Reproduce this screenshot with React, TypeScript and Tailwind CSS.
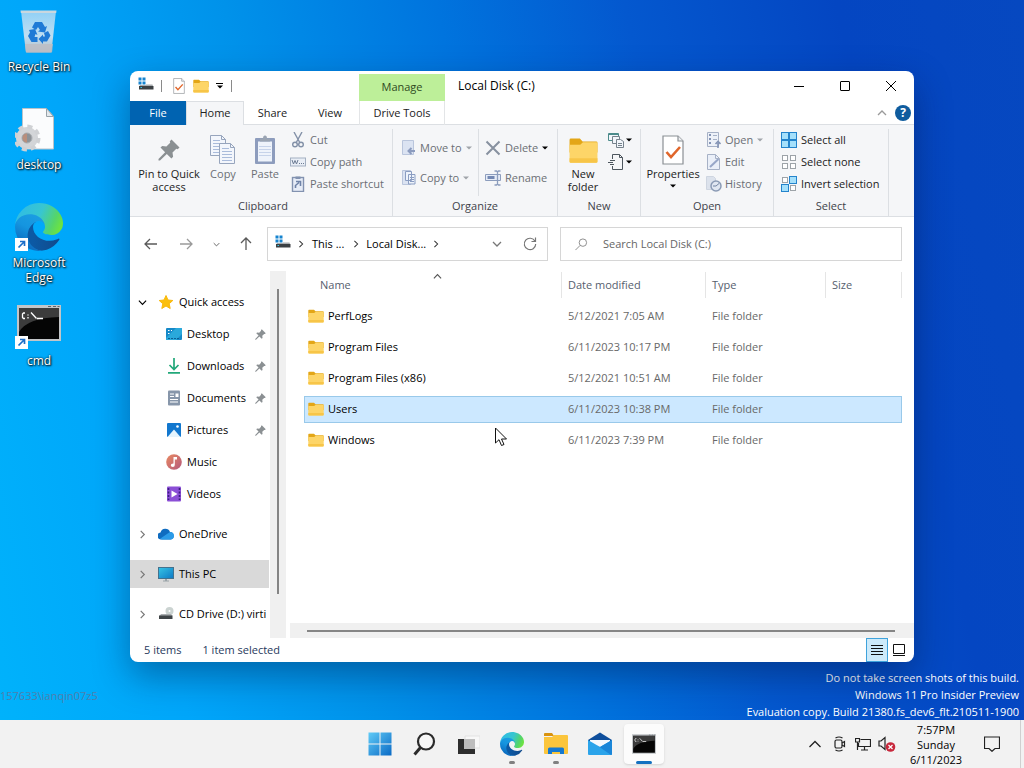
import type { ReactNode } from "react";
import clsx from "clsx";

const EdgeIcon = ({ id, className }: { id: string; className?: string }) => (
	<svg viewBox="0 0 256 256" className={className}>
		<defs>
			<linearGradient id={`${id}-a`} x1="0.2" y1="0.5" x2="1" y2="0.5">
				<stop offset="0" stopColor="#0c59a4" />
				<stop offset="1" stopColor="#114a8b" />
			</linearGradient>
			<linearGradient id={`${id}-b`} x1="0.7" y1="0.1" x2="0.3" y2="1">
				<stop offset="0" stopColor="#1b9de2" />
				<stop offset="0.4" stopColor="#1595df" />
				<stop offset="1" stopColor="#0a62b8" />
			</linearGradient>
			<linearGradient id={`${id}-c`} x1="0" y1="0.3" x2="1" y2="0.6">
				<stop offset="0" stopColor="#2fbbe6" />
				<stop offset="0.5" stopColor="#38c6d0" />
				<stop offset="0.82" stopColor="#55d569" />
				<stop offset="1" stopColor="#6ee33f" />
			</linearGradient>
		</defs>
		<g transform="translate(-4.6 -4.9)">
			<path
				fill={`url(#${id}-a)`}
				d="M235.68 195.46a93.73 93.73 0 0 1-10.54 4.71 101.87 101.87 0 0 1-35.9 6.46c-47.32 0-88.54-32.55-88.54-74.32A31.48 31.48 0 0 1 117.13 105c-42.8 1.8-53.8 46.4-53.8 72.53 0 73.88 68.09 81.37 82.76 81.37 7.91 0 19.84-2.3 27-4.56l1.31-.44a128.34 128.34 0 0 0 66.6-52.8 4 4 0 0 0-5.32-5.64z"
			/>
			<path
				fill={`url(#${id}-b)`}
				d="M110.34 246.34A79.2 79.2 0 0 1 87.6 225a80.72 80.72 0 0 1 29.53-120c3.12-1.47 8.45-4.13 15.54-4a32.35 32.35 0 0 1 25.69 13 31.88 31.88 0 0 1 6.36 18.66c0-.21 24.46-79.6-80-79.6-43.9 0-80 41.66-80 78.21a130.15 130.15 0 0 0 12.11 56 128 128 0 0 0 156.38 67.11 75.55 75.55 0 0 1-62.78-8z"
			/>
			<path
				fill={`url(#${id}-c)`}
				d="M156.94 153.78c-.81 1.05-3.3 2.5-3.3 5.66 0 2.61 1.7 5.12 4.72 7.23 14.38 10 41.49 8.68 41.56 8.68a59.56 59.56 0 0 0 30.27-8.35 61.38 61.38 0 0 0 30.43-52.88c.26-22.41-8-37.31-11.34-43.91C228.09 28.76 182.35 4.92 132.61 4.92a128 128 0 0 0-128 126.2c.48-36.54 36.8-66.05 80-66.05 3.5 0 23.46.34 42 10.07 16.34 8.58 24.9 18.94 30.85 29.21 6.18 10.67 7.28 24.15 7.28 29.52s-2.74 13.33-7.8 19.91z"
			/>
		</g>
	</svg>
);

const RecycleBinIcon = () => (
	<svg viewBox="0 0 48 48" className="size-12">
		<defs>
			<linearGradient id="bin" x1="0" y1="0" x2="0" y2="1">
				<stop offset="0" stopColor="#8fd0f6" />
				<stop offset="0.6" stopColor="#bfdef2" />
				<stop offset="1" stopColor="#b3bcc4" />
			</linearGradient>
		</defs>
		<path d="M6 4h35l-4.500 40.500q-.2 1-1 1H12q-1 0-1.200-1z" fill="url(#bin)" />
		<path d="M5.500 3.500h36l-.3 2.500H5.800z" fill="#c9d7df" />
		<path d="M10 37h28l-1 8.500H11z" fill="#bdbdc3" opacity=".8" />
		<g fill="#1f7ad6">
			<path d="M20 15h7l3 5 2-1-2 6.500-7-1 2-1.500-2-3-2 3-4-2.500z" />
			<path d="M29 26l4-2 2.500 4.500-3.500 6h-4v2.500l-4.500-5 4.500-4.500v2h2z" />
			<path d="M14 23l6-1 2.500 6-2-1-1 3h3v5h-6L13 29l2-3.500z" />
		</g>
	</svg>
);

const SettingsFileIcon = () => (
	<svg viewBox="0 0 48 48" className="size-12">
		<path d="M7.500 3.500h24l7 8v32.500h-31z" fill="#fbfcfd" stroke="#b9c3ca" />
		<path d="M31.500 3.500v8h7z" fill="#e4e9ec" stroke="#98a2a9" />
		<circle cx="12" cy="33" r="8" fill="none" stroke="#d3d5d8" strokeWidth="6" />
		<circle cx="12" cy="33" r="11.500" fill="none" stroke="#cfd1d4" strokeWidth="4" strokeDasharray="5 4.030" />
		<circle cx="12" cy="33" r="5" fill="#8d9297" stroke="#a9adb1" />
		<path d="M12 28.500a4.500 4.500 0 0 0 0 9z" fill="#b98f7d" />
	</svg>
);

const CmdIcon = ({ className }: { className?: string }) => (
	<svg viewBox="0 0 44 36" className={className}>
		<rect width="44" height="36" fill="#c3c6c9" />
		<path d="M31 1.500h3M36 1.500h3M40.500 1.500h2" stroke="#59656e" />
		<rect x="2" y="3" width="40" height="31" fill="#050505" />
		<path d="M2 3h40v9Q10 13 2 27z" fill="#3c3c3c" />
		<path d="M8 8H6.500L5.500 9v3.500l1 1H8M11 9.500v1M11 12v1.500M14 7.500l5.500 6M20 13.500h6" stroke="#fff" strokeWidth="1.300" fill="none" />
	</svg>
);

const ShortcutBadge = () => (
	<svg viewBox="0 0 13 13" className="absolute bottom-0 left-0 size-[13px]">
		<rect width="13" height="13" fill="#fff" />
		<path d="M3.500 9.500L9 4M5 3.500h4.500V8" stroke="#1c6fc9" strokeWidth="1.700" fill="none" />
	</svg>
);

const FolderIcon = ({ className }: { className?: string }) => (
	<svg viewBox="0 0 16 14" className={className} preserveAspectRatio="none">
		<path d="M.3 1.500Q.3.800 1 .8h5l1.500 1.500H15q.7 0 .7.700v5H.3z" fill="#e3a617" />
		<path d="M.3 4h5.900L7.700 2.700H15q.7 0 .7.700v9.300q0 .7-.7.700H1q-.7 0-.7-.7z" fill="#fdd568" />
		<path d="M.3 11h15.400v1.800q0 .6-.7.600H1q-.7 0-.7-.6z" fill="#f7c548" />
	</svg>
);

const DriveIcon = () => (
	<svg viewBox="0 0 16 14" className="mb-1 h-[14px] w-4 shrink-0">
		<path d="M.5.5h3v3h-3zM4.500.5h3v3h-3zM.5 4.500h3v3h-3zM4.500 4.500h3v3h-3z" fill="#1583cf" />
		<path d="M8 7.500h6.500l.5 1.500H1.500L2 8h6z" fill="#a9adb0" />
		<path d="M1 9h14.500v3.500H1z" fill="#3c4144" />
		<path d="M2.500 10.500h1.500" stroke="#39c6e8" />
	</svg>
);

const CheckPageIcon = ({ className }: { className?: string }) => (
	<svg viewBox="0 0 22 30" className={className}>
		<path d="M1 1h15l5 5v23H1z" fill="#fff" stroke="#8a8f94" strokeWidth="1.200" />
		<path d="M16 1v5h5" fill="#eef0f2" stroke="#8a8f94" strokeWidth="1.200" />
		<path d="M4.500 17l4.500 5 9-10" stroke="#e0662b" strokeWidth="2.600" fill="none" />
	</svg>
);

const PinIcon = ({ className }: { className?: string }) => (
	<svg viewBox="0 0 22 22" className={className} fill="#8b9093">
		<path d="M13.500.5l8 8-1.800 1.700-1.400-.4-3.800 3.800.6 4.200-1.700 1.700-4.600-4.600L2 21.500H.5V20l6.600-6.800L2.500 8.600l1.700-1.700 4.200.6 3.800-3.800-.4-1.400z" />
	</svg>
);

const Chevron = ({ dir, className }: { dir: "up" | "down" | "right"; className?: string }) => (
	<svg viewBox="0 0 10 10" className={clsx("shrink-0", className)} fill="none" stroke="currentColor" strokeWidth="1.300">
		{dir === "up" && <path d="M1 7l4-4 4 4" />}
		{dir === "down" && <path d="M1 3l4 4 4-4" />}
		{dir === "right" && <path d="M3 1l4 4-4 4" />}
	</svg>
);

const Caret = ({ className }: { className?: string }) => (
	<svg viewBox="0 0 6 4" className={clsx("h-1 w-[6px] shrink-0", className)} fill="currentColor">
		<path d="M0 .5h6L3 3.500z" />
	</svg>
);

/* ribbon drawings */

const PageLines = ({ x, y }: { x: number; y: number }) => (
	<g transform={`translate(${x} ${y})`}>
		<path d="M.5.5h11l4 4v16H.5z" fill="#f3f6fc" stroke="#97a5bd" />
		<path d="M11.500.5v4h4" fill="none" stroke="#97a5bd" />
		<path d="M3 5.500h7M3 8.500h10M3 11.500h10M3 14.500h10M3 17.500h10" stroke="#a9bbdb" />
	</g>
);

const CopyIcon = () => (
	<svg viewBox="0 0 26 30" className="h-[30px] w-[26px]">
		<PageLines x={0} y={0} />
		<PageLines x={9} y={8} />
	</svg>
);

const PasteIcon = () => (
	<svg viewBox="0 0 22 30" className="h-[30px] w-[22px]">
		<rect x="1" y="3" width="20" height="26" rx="1" fill="#8d9cbd" />
		<path d="M4 6.500h14v20H4z" fill="#eef3fb" />
		<path d="M6 3.500h3q0-3 2-3t2 3h3v3H6z" fill="#9aa4b2" />
		<path d="M5 11.500h12M5 14.500h12M5 17.500h12M5 20.500h12" stroke="#c6d3ea" />
	</svg>
);

const CutIcon = () => (
	<svg viewBox="0 0 16 16" className="size-4 shrink-0" fill="none" stroke="#8391a8" strokeWidth="1.400">
		<path d="M4 0l6 11M12 0L6 11" />
		<circle cx="5" cy="12.500" r="2.300" />
		<circle cx="11" cy="12.500" r="2.300" />
	</svg>
);

const CopyPathIcon = () => (
	<svg viewBox="0 0 16 16" className="size-4 shrink-0" fill="none">
		<rect x=".5" y="4" width="15" height="8" fill="#e9eef6" stroke="#a3afc1" />
		<path d="M2 6l1.500 4L5 6.500 6.500 10 8 6" stroke="#6c7b93" />
		<path d="M9 9.500h1M11 9.500h1M13 9.500h1" stroke="#6c7b93" />
	</svg>
);

const PasteShortcutIcon = () => (
	<svg viewBox="0 0 16 16" className="size-4 shrink-0" fill="none">
		<rect x="2.500" y="1.500" width="11" height="14" fill="#e6ecf7" stroke="#8292b0" strokeWidth="1.400" />
		<path d="M5.500.5h5v2.500h-5z" fill="#8292b0" />
		<path d="M5.500 12V9.500l3.500-3M6 5.500h4.500V10" stroke="#6f83a8" strokeWidth="1.600" />
	</svg>
);

const MoveToIcon = () => (
	<svg viewBox="0 0 14 16" className="h-4 w-[14px] shrink-0" fill="none">
		<path d="M.5.5h11v14H.5z" fill="#dbe3f2" stroke="#b9c5dc" />
		<path d="M13 11H7M9.500 8L6.500 11l3 3" stroke="#8c9cbf" strokeWidth="2" />
	</svg>
);

const CopyToIcon = () => (
	<svg viewBox="0 0 14 16" className="h-4 w-[14px] shrink-0" fill="none">
		<path d="M.5.5h8v14h-8z" fill="#dbe3f2" stroke="#b9c5dc" />
		<path d="M3.500 1.500h6v9h-6zM6.500 4.500h6.500v9.500H6.500z" fill="#eef3fb" stroke="#8a9dc2" />
		<path d="M8 7.500h4M8 9.500h4M8 11.500h4" stroke="#8a9dc2" />
	</svg>
);

const DeleteIcon = () => (
	<svg viewBox="0 0 16 16" className="size-4 shrink-0" fill="none" stroke="#8791a0" strokeWidth="2">
		<path d="M1.500 1.500l13 13M14.500 1.500l-13 13" />
	</svg>
);

const RenameIcon = () => (
	<svg viewBox="0 0 16 16" className="size-4 shrink-0" fill="none" stroke="#8c9dbd">
		<path d="M.5 4.500h15v6H.5z" fill="#e6ecf7" />
		<path d="M2.500 7.500h7" stroke="#7388b3" strokeWidth="3" />
		<path d="M9.500 1h2l1 1 1-1h2M9.500 15h2l1-1 1 1h2M12.500 2v12" strokeWidth="1.300" />
	</svg>
);

const NewItemIcon = () => (
	<svg viewBox="0 0 16 16" className="size-4 shrink-0" fill="#f2f6fb" stroke="#76828c">
		<path d="M.5 1.500h10v7h-10z" stroke="#4b8b8b" />
		<path d="M1 2.500h9" stroke="#4b8b8b" />
		<path d="M4.500 4.500h7v7h-7z" />
		<path d="M8.500 7.500h4l3 2v6h-7z" />
		<path d="M10 11.500h4M10 13.500h4" />
	</svg>
);

const EasyAccessIcon = () => (
	<svg viewBox="0 0 16 16" className="size-4 shrink-0" fill="none" stroke="#4d565e">
		<path d="M4.500 5V.5h7l3 3v12h-10V12M11.500.5v3h3" />
		<path d="M2 6.500h5M0 8.500h5M2 10.500h4" />
	</svg>
);

const OpenIcon = () => (
	<svg viewBox="0 0 14 16" className="h-4 w-[14px] shrink-0" fill="none">
		<path d="M.5.500h11v14H.5z" fill="#edf1f8" stroke="#a6b1c6" />
		<path d="M2 3h2M2 7h2M2 11h2" stroke="#8494b5" strokeWidth="2" />
		<path d="M6 3.500h4M6 7.500h4" stroke="#a6b1c6" />
		<path d="M11 16v-5M8.500 12L11 9.500l2.500 2.500" stroke="#8494b5" strokeWidth="1.600" />
	</svg>
);

const EditIcon = () => (
	<svg viewBox="0 0 14 16" className="h-4 w-[14px] shrink-0" fill="none">
		<path d="M.5.5h8l4 4v11H.5z" fill="#eaeff8" stroke="#a6b1c6" />
		<path d="M3 13l8.500-8" stroke="#98a7c8" strokeWidth="2" />
		<path d="M8.500.5v4h4" stroke="#a6b1c6" />
	</svg>
);

const HistoryIcon = () => (
	<svg viewBox="0 0 16 16" className="-mx-px size-4 shrink-0" fill="none">
		<path d="M.5.5h7l2 2v11H.5z" fill="#dce2ec" stroke="#ced5e0" />
		<circle cx="10" cy="10" r="5" fill="#dfe6f1" stroke="#8b9bb5" strokeWidth="1.500" />
		<path d="M10 10l3-2.500M10 10H7" stroke="#7183a2" />
	</svg>
);

const SelectIcon = ({ filled }: { filled: boolean[] }) => (
	<svg viewBox="0 0 16 16" className="size-4 shrink-0">
		{filled.map((on, i) => (
			<rect
				key={i}
				x={(i % 2) * 8 + (on ? 0.5 : 1.5)}
				y={Math.floor(i / 2) * 8 + (on ? 0.5 : 1.5)}
				width={on ? 7 : 5}
				height={on ? 7 : 5}
				fill={on ? "#a5e0fb" : "#fff"}
				stroke={on ? "#2484cc" : "#9da3a8"}
			/>
		))}
	</svg>
);

/* sidebar drawings */

const StarIcon = () => (
	<svg viewBox="0 0 16 16" className="size-4 shrink-0">
		<path d="M8 1.500l2 4.500 4.800.500-3.600 3.200 1 4.800L8 12l-4.200 2.500 1-4.800L1.200 6.500 6 6z" fill="#fbbf0c" stroke="#f9b80a" strokeLinejoin="round" />
	</svg>
);

const DesktopIcon = () => (
	<svg viewBox="0 0 16 16" className="size-4 shrink-0">
		<rect y="2" width="16" height="12" rx="1" fill="#1689c8" />
		<path d="M0 12L10 2h5q1 0 1 1v5l-6 6H1q-1 0-1-1z" fill="#2aa9db" />
		<path d="M2 4.500h1.500M2 7.500h1.500M5 4.500h1" stroke="#fff" />
		<path d="M2 12.500h12" stroke="#0b5f94" strokeDasharray="2 1" />
	</svg>
);

const DownloadsIcon = () => (
	<svg viewBox="0 0 16 16" className="size-4 shrink-0" fill="none" stroke="#22a87a" strokeWidth="1.700">
		<path d="M8 0v11M3.500 7L8 11.500 12.500 7M2 14.800h12" />
	</svg>
);

const DocumentsIcon = () => (
	<svg viewBox="0 0 16 16" className="size-4 shrink-0">
		<rect x="2" y=".5" width="12" height="15" rx="1" fill="#8796aa" />
		<path d="M4 4h4M4 6.500h4M4 9.500h8M4 12h8" stroke="#fff" strokeWidth="1.200" />
		<path d="M9.500 3.500h3v3.500h-3z" fill="#fff" />
	</svg>
);

const PicturesIcon = () => (
	<svg viewBox="0 0 16 16" className="size-4 shrink-0">
		<rect x="1" y="1" width="14" height="14" rx="1" fill="#1277ce" />
		<path d="M1.500 15L8 7.500l6.500 7.500z" fill="#e5f4fd" />
		<circle cx="11.500" cy="4.500" r="1.300" fill="#fff" />
	</svg>
);

const MusicIcon = () => (
	<svg viewBox="0 0 16 16" className="size-4 shrink-0">
		<defs>
			<linearGradient id="music" x1="0" y1="0" x2="1" y2="1">
				<stop offset="0" stopColor="#e98a62" />
				<stop offset="1" stopColor="#b4587c" />
			</linearGradient>
		</defs>
		<circle cx="8" cy="8" r="7.800" fill="url(#music)" />
		<path d="M7.500 3h3.500v2.500H8.800V11q0 2-2 2t-2-1.800 2.700-1.700z" fill="#fff" />
	</svg>
);

const VideosIcon = () => (
	<svg viewBox="0 0 16 16" className="size-4 shrink-0">
		<rect x="1" y=".5" width="14" height="15" rx="1" fill="#8b4fd6" />
		<path d="M2.500 2v12M13.500 2v12" stroke="#3c1c80" strokeWidth="1.600" strokeDasharray="2 1.500" />
		<path d="M5.500 4.500L11.500 8l-6 3.500z" fill="#fff" />
	</svg>
);

const OneDriveIcon = () => (
	<svg viewBox="0 0 16 16" className="size-4 shrink-0">
		<path d="M3.500 13.500A3.500 3.500 0 0 1 2.500 6.500 5 5 0 0 1 12 6a3.800 3.800 0 0 1 .8 7.500z" fill="#0f6cc0" />
		<path d="M4 13.500l-2-.7L9 8l3-2a3.800 3.800 0 0 1 1 7.500z" fill="#2b9be8" />
	</svg>
);

const ThisPcIcon = () => (
	<svg viewBox="0 0 16 16" className="size-4 shrink-0">
		<defs>
			<linearGradient id="pc" x1="0" y1="0" x2="1" y2="1">
				<stop offset="0" stopColor="#37c5e6" />
				<stop offset="1" stopColor="#0d78c4" />
			</linearGradient>
		</defs>
		<rect x=".5" y="1.500" width="15" height="11" fill="url(#pc)" stroke="#44728e" />
		<path d="M7 13h2v1.500h2v1H5v-1h2z" fill="#9aa3a8" />
	</svg>
);

const CdDriveIcon = () => (
	<svg viewBox="0 0 16 16" className="size-4 shrink-0">
		<circle cx="11.500" cy="5" r="4" fill="#cbd3d1" />
		<circle cx="11.500" cy="5" r="1" fill="#fff" />
		<path d="M3 8h10l1.500 2h-13z" fill="#a9adb0" />
		<path d="M1 9.500h13.500v3.500H1z" fill="#3f4447" />
	</svg>
);

const RibbonGroup = ({ label, className, children }: { label: string; className: string; children: ReactNode }) => (
	<section className={clsx("mt-1 flex flex-col border-r border-[#dcdfe3]", className)}>
		<div className="flex flex-1">{children}</div>
		<h2 className="h-5 text-center leading-5 text-[#3f434a]">{label}</h2>
	</section>
);

const RibbonItem = ({ icon, label, caret, disabled, darkCaret }: { icon: ReactNode; label: string; caret?: boolean; disabled?: boolean; darkCaret?: boolean }) => (
	<button
		disabled={disabled}
		className={clsx("flex h-[22px] items-center gap-1 whitespace-nowrap", disabled ? "text-[#6b6f75]" : "text-[#222]")}>
		{icon}
		{label}
		{caret && <Caret className={darkCaret ? "text-black" : "text-[#a0a4a9]"} />}
	</button>
);

const RibbonTall = ({ icon, label, className, disabled, caret }: { icon: ReactNode; label: string; className: string; disabled?: boolean; caret?: boolean }) => (
	<button
		disabled={disabled}
		className={clsx("flex flex-col items-center pt-1", className, disabled ? "text-[#6b6f75]" : "text-[#222]")}>
		<span className="flex h-[34px] items-center justify-center">{icon}</span>
		<span className="text-center leading-[13px]">{label}</span>
		{caret && <Caret className="mt-1 text-black" />}
	</button>
);

const ribbonTabs = [
	{ label: "File", className: "w-14 bg-[#0063b1] text-white" },
	{ label: "Home", className: "w-[58px] border-x border-t border-[#dcdfe3] bg-[#f5f6f8] text-[#222]" },
	{ label: "Share", className: "w-[57px] text-[#222]" },
	{ label: "View", className: "w-[58px] text-[#222]" },
	{ label: "Drive Tools", className: "w-[86px] border-x border-[#e3e5e7] text-[#222]" },
];

const quickAccess = [
	{ label: "Desktop", icon: <DesktopIcon />, pinned: true },
	{ label: "Downloads", icon: <DownloadsIcon />, pinned: true },
	{ label: "Documents", icon: <DocumentsIcon />, pinned: true },
	{ label: "Pictures", icon: <PicturesIcon />, pinned: true },
	{ label: "Music", icon: <MusicIcon /> },
	{ label: "Videos", icon: <VideosIcon /> },
];

const places = [
	{ label: "OneDrive", icon: <OneDriveIcon /> },
	{ label: "This PC", icon: <ThisPcIcon />, active: true },
	{ label: "CD Drive (D:) virti", icon: <CdDriveIcon /> },
];

const files = [
	{ name: "PerfLogs", date: "5/12/2021 7:05 AM" },
	{ name: "Program Files", date: "6/11/2023 10:17 PM" },
	{ name: "Program Files (x86)", date: "5/12/2021 10:51 AM" },
	{ name: "Users", date: "6/11/2023 10:38 PM", selected: true },
	{ name: "Windows", date: "6/11/2023 7:39 PM" },
];

const desktopIcons = [
	{ label: "Recycle Bin", icon: <RecycleBinIcon /> },
	{ label: "desktop", icon: <SettingsFileIcon /> },
	{ label: "Microsoft Edge", icon: <EdgeIcon id="desk-edge" className="size-12" />, shortcut: true },
	{ label: "cmd", icon: <CmdIcon className="mb-2 h-9 w-11" />, shortcut: true },
];

const TitleBar = () => (
	<header className="flex h-[30px]">
		<div className="flex w-[229px] items-center pl-2">
			<DriveIcon />
			<span className="ml-[7px] h-3 w-px bg-[#8a8a8a]" />
			<button aria-label="Properties" className="ml-[11px]">
				<CheckPageIcon className="h-4 w-3" />
			</button>
			<button aria-label="New folder" className="ml-2">
				<FolderIcon className="h-[14px] w-4" />
			</button>
			<button aria-label="Customize Quick Access Toolbar" className="ml-[7px] flex flex-col items-center gap-px">
				<span className="h-px w-[7px] bg-black" />
				<Caret />
			</button>
			<span className="ml-2 h-3 w-px bg-[#8a8a8a]" />
		</div>
		<div className="mt-[3px] flex w-[86px] items-center justify-center bg-[#bdef99] text-[#2f4a1f]">Manage</div>
		<h1 className="flex flex-1 items-center pl-[13px] text-xs text-black">Local Disk (C:)</h1>
		<button aria-label="Minimize" className="flex w-[46px] items-center justify-center">
			<span className="h-px w-[10px] bg-black" />
		</button>
		<button aria-label="Maximize" className="flex w-[46px] items-center justify-center">
			<span className="size-[10px] rounded-[1px] border border-black" />
		</button>
		<button aria-label="Close" className="flex w-[46px] items-center justify-center">
			<svg viewBox="0 0 10 10" className="size-[10px]" stroke="#000">
				<path d="M0 0l10 10M10 0L0 10" />
			</svg>
		</button>
	</header>
);

const Ribbon = () => (
	<>
		<nav className="flex h-6 border-b border-[#dcdfe3]">
			{ribbonTabs.map((tab) => (
				<button key={tab.label} className={clsx("h-6", tab.className)}>
					{tab.label}
				</button>
			))}
			<div className="flex flex-1 items-center justify-end gap-2 pr-[3px]">
				<button aria-label="Minimize the Ribbon" className="text-[#9a9a9a]">
					<Chevron dir="up" className="size-[10px]" />
				</button>
				<button aria-label="Help" className="size-4 rounded-full bg-[#0f5c9e] text-center text-xs font-bold leading-4 text-white">
					?
				</button>
			</div>
		</nav>
		<div className="flex h-[92px] border-b border-[#dcdfe3] bg-[#f5f6f8]">
			<RibbonGroup label="Clipboard" className="w-[263px] pl-1">
				<RibbonTall className="w-[70px]" icon={<PinIcon className="size-[22px]" />} label="Pin to Quick access" />
				<RibbonTall disabled className="w-[38px]" icon={<CopyIcon />} label="Copy" />
				<RibbonTall disabled className="w-[46px]" icon={<PasteIcon />} label="Paste" />
				<div className="ml-[2px]">
					<RibbonItem disabled icon={<CutIcon />} label="Cut" />
					<RibbonItem disabled icon={<CopyPathIcon />} label="Copy path" />
					<RibbonItem disabled icon={<PasteShortcutIcon />} label="Paste shortcut" />
				</div>
			</RibbonGroup>
			<RibbonGroup label="Organize" className="w-[165px]">
				<div className="flex w-[86px] flex-col gap-2 border-r border-[#dcdfe3] pl-[9px] pt-2">
					<RibbonItem disabled caret icon={<MoveToIcon />} label="Move to" />
					<RibbonItem disabled caret icon={<CopyToIcon />} label="Copy to" />
				</div>
				<div className="flex flex-col gap-2 pl-[6px] pt-2">
					<RibbonItem disabled caret darkCaret icon={<DeleteIcon />} label="Delete" />
					<RibbonItem disabled icon={<RenameIcon />} label="Rename" />
				</div>
			</RibbonGroup>
			<RibbonGroup label="New" className="w-[83px]">
				<RibbonTall className="w-[50px]" icon={<FolderIcon className="h-[27px] w-[29px]" />} label="New folder" />
				<div>
					<button aria-label="New item" className="flex h-[22px] items-center gap-[2px]">
						<NewItemIcon />
						<Caret className="text-black" />
					</button>
					<button aria-label="Easy access" className="flex h-[22px] items-center gap-[2px]">
						<EasyAccessIcon />
						<Caret className="text-black" />
					</button>
				</div>
			</RibbonGroup>
			<RibbonGroup label="Open" className="w-[133px]">
				<RibbonTall caret className="w-[64px]" icon={<CheckPageIcon className="h-[30px] w-[22px]" />} label="Properties" />
				<div className="pl-[2px]">
					<RibbonItem disabled caret icon={<OpenIcon />} label="Open" />
					<RibbonItem disabled icon={<EditIcon />} label="Edit" />
					<RibbonItem disabled icon={<HistoryIcon />} label="History" />
				</div>
			</RibbonGroup>
			<RibbonGroup label="Select" className="w-[115px]">
				<div className="pl-[7px]">
					<RibbonItem icon={<SelectIcon filled={[true, true, true, true]} />} label="Select all" />
					<RibbonItem icon={<SelectIcon filled={[false, false, false, false]} />} label="Select none" />
					<RibbonItem icon={<SelectIcon filled={[false, true, true, false]} />} label="Invert selection" />
				</div>
			</RibbonGroup>
		</div>
	</>
);

const AddressRow = () => (
	<div className="flex items-center gap-3 pb-[7px] pl-[14px] pr-3 pt-[10px]">
		<div className="flex w-[111px] items-center text-[#5a5a5a]">
			<button aria-label="Back">
				<svg viewBox="0 0 14 14" className="size-[14px]" fill="none" stroke="currentColor" strokeWidth="1.300">
					<path d="M13 7H1M6 2L1 7l5 5" />
				</svg>
			</button>
			<button aria-label="Forward" className="ml-[21px] text-[#9a9a9a]">
				<svg viewBox="0 0 14 14" className="size-[14px]" fill="none" stroke="currentColor" strokeWidth="1.300">
					<path d="M1 7h12M8 2l5 5-5 5" />
				</svg>
			</button>
			<button aria-label="Recent locations" className="ml-5">
				<Chevron dir="down" className="size-[7px]" />
			</button>
			<button aria-label="Up" className="ml-[19px]">
				<svg viewBox="0 0 14 14" className="size-[14px]" fill="none" stroke="currentColor" strokeWidth="1.300">
					<path d="M7 13V1M2 6l5-5 5 5" />
				</svg>
			</button>
		</div>
		<div className="flex h-[34px] w-[281px] items-center border border-[#d6d6d6] pl-[7px] pr-[10px] text-black">
			<DriveIcon />
			<Chevron dir="right" className="ml-[6px] size-2 text-[#333]" />
			<button className="ml-[7px]">This ...</button>
			<Chevron dir="right" className="ml-2 size-2 text-[#333]" />
			<button className="ml-[6px]">Local Disk...</button>
			<Chevron dir="right" className="ml-[6px] size-2 text-[#333]" />
			<button aria-label="Previous locations" className="ml-auto text-[#777]">
				<Chevron dir="down" className="size-[10px]" />
			</button>
			<button aria-label="Refresh" className="ml-[21px]">
				<svg viewBox="0 0 14 14" className="size-[14px]" fill="none" stroke="#777" strokeWidth="1.200">
					<path d="M12 4.200A5.700 5.700 0 1 0 12.700 7M12.500.5v4h-4" />
				</svg>
			</button>
		</div>
		<label className="flex h-[34px] flex-1 items-center border border-[#d6d6d6] pl-[14px]">
			<svg viewBox="0 0 14 14" className="size-[13px]" fill="none" stroke="#888">
				<circle cx="8.500" cy="5" r="4" />
				<path d="M5.500 8L.5 13" />
			</svg>
			<input
				aria-label="Search"
				placeholder="Search Local Disk (C:)"
				className="ml-[15px] min-w-0 flex-1 bg-transparent outline-none placeholder:text-[#666]"
			/>
		</label>
	</div>
);

const Sidebar = () => (
	<aside className="flex w-[156px] shrink-0">
		<nav className="flex min-w-0 flex-1 flex-col gap-1 overflow-hidden whitespace-nowrap pt-5 text-black">
			<a href="#quick" className="flex h-7 items-center pl-2">
				<Chevron dir="down" className="size-[9px]" />
				<span className="ml-[11px] mr-[5px]">
					<StarIcon />
				</span>
				Quick access
			</a>
			{quickAccess.map((item) => (
				<a key={item.label} href="#folder" className="flex h-7 items-center gap-[5px] pl-9 pr-[3px]">
					{item.icon}
					{item.label}
					{item.pinned && <PinIcon className="ml-auto size-[11px] shrink-0" />}
				</a>
			))}
			{places.map((item) => (
				<a key={item.label} href="#place" className={clsx("mt-2 flex h-7 items-center pl-2", item.active && "bg-[#d9d9d9]")}>
					<Chevron dir="right" className="size-[9px] text-[#777]" />
					<span className="ml-[11px] mr-[5px]">{item.icon}</span>
					{item.label}
				</a>
			))}
		</nav>
		<div className="ml-px mt-[3px] w-4 bg-[#f0f0f0] pb-11 pl-[7px] pt-[18px]">
			<div className="h-full w-[2px] bg-[#858585]" />
		</div>
	</aside>
);

const FileList = () => (
	<div className="flex flex-1 flex-col pl-1">
		<div className="flex-1 pl-[14px] pr-3">
			<table className="w-full table-fixed border-separate border-spacing-x-0 border-spacing-y-1">
				<thead>
					<tr className="h-[27px] text-left align-top leading-[26px] text-[#56606e]">
						<th className="relative w-[257px] p-0 pl-4 font-normal">
							Name
							<Chevron dir="up" className="absolute left-[129px] top-0 size-[9px] text-[#555]" />
						</th>
						<th className="w-36 p-0 font-normal">
							<div className="border-l border-[#e5e5e5] pl-[6px]">Date modified</div>
						</th>
						<th className="w-[120px] p-0 font-normal">
							<div className="border-l border-[#e5e5e5] pl-[6px]">Type</div>
						</th>
						<th className="p-0 font-normal">
							<div className="border-x border-[#e5e5e5] pl-[6px]">Size</div>
						</th>
					</tr>
				</thead>
				<tbody>
					{files.map((file) => (
						<tr
							key={file.name}
							className={clsx("h-[27px] text-[#686868]", file.selected && "bg-[#cce8ff] outline outline-1 -outline-offset-1 outline-[#99c9ea]")}>
							<td className="p-0 text-black">
								<span className="flex items-center gap-1 pl-1">
									<FolderIcon className="mb-[2px] h-[14px] w-4" />
									{file.name}
								</span>
							</td>
							<td className="p-0 pl-[7px]">{file.date}</td>
							<td className="p-0 pl-[7px]">File folder</td>
							<td className="p-0" />
						</tr>
					))}
				</tbody>
			</table>
		</div>
		<div className="h-[15px] bg-[#f0f0f0] pl-[17px] pr-[19px] pt-[7px]">
			<div className="h-[2px] bg-[#858585]" />
		</div>
	</div>
);

const StatusBar = () => (
	<footer className="flex h-6 items-center pl-[14px] pr-[9px] text-[#27395c]">
		<span>5 items</span>
		<span className="ml-[21px]">1 item selected</span>
		<button aria-label="Details view" className="ml-auto flex h-6 w-[22px] items-center justify-center border border-[#3fa3dc] bg-[#cdeafa]">
			<svg viewBox="0 0 12 11" className="h-[11px] w-3" stroke="#111">
				<path d="M0 .5h12M0 3.500h12M0 6.500h12M0 9.500h12" />
			</svg>
		</button>
		<button aria-label="Thumbnail view" className="ml-[5px]">
			<svg viewBox="0 0 12 12" className="size-3" fill="none" stroke="#111">
				<path d="M.5.5h11v9H.5zM0 11.500h12" />
			</svg>
		</button>
	</footer>
);

const TaskButton = ({ label, children, mark, active }: { label: string; children: ReactNode; mark?: string; active?: boolean }) => (
	<button aria-label={label} className="relative flex h-12 w-11 items-center justify-center">
		<span className={clsx("flex h-10 w-10 items-center justify-center rounded", active && "bg-[#fcfcfc] shadow-sm")}>{children}</span>
		{mark && <span className={clsx("absolute bottom-1 left-1/2 h-[3px] -translate-x-1/2 rounded-full", mark)} />}
	</button>
);

const Taskbar = () => (
	<footer className="grid h-12 grid-cols-[1fr_auto_1fr] bg-[#f2f2f2] text-black">
		<div />
		<div className="flex">
			<TaskButton label="Start">
				<svg viewBox="0 0 24 24" className="size-6">
					<defs>
						<linearGradient id="start" x1="0" y1="0" x2="24" y2="24" gradientUnits="userSpaceOnUse">
							<stop offset="0" stopColor="#62cdf8" />
							<stop offset="1" stopColor="#0868c4" />
						</linearGradient>
					</defs>
					<path d="M.5.5h11v11H.5zM12.500.5h11v11h-11zM.5 12.500h11v11H.5zM12.500 12.500h11v11h-11z" fill="url(#start)" />
				</svg>
			</TaskButton>
			<TaskButton label="Search">
				<svg viewBox="0 0 24 24" className="size-6" fill="none" stroke="#2b2b2b">
					<circle cx="14" cy="9.500" r="8" fill="#f7f7f7" strokeWidth="2.200" />
					<path d="M8.500 15.500l-6 7" strokeWidth="3" />
				</svg>
			</TaskButton>
			<TaskButton label="Task View">
				<svg viewBox="0 0 24 24" className="size-6">
					<path d="M9 4h15v12H9z" fill="#f8f8f8" stroke="#e2e2e2" />
					<path d="M2 7h17v15H2z" fill="#2e2e2e" />
					<path d="M8 7h11v10H8z" fill="#bdbdbd" />
				</svg>
			</TaskButton>
			<TaskButton label="Microsoft Edge" mark="bg-[#808080] w-[6px]">
				<EdgeIcon id="task-edge" className="size-6" />
			</TaskButton>
			<TaskButton label="File Explorer" mark="bg-[#808080] w-[6px]">
				<svg viewBox="0 0 24 24" className="size-6">
					<path d="M0 2q0-1 1-1h7l2 3H0z" fill="#d9930f" />
					<path d="M0 5h8l2-2h13q1 0 1 1v17q0 1-1 1H1q-1 0-1-1z" fill="#fbc53c" />
					<path d="M4 22v-5q0-1.500 1.500-1.500h13q1.500 0 1.500 1.500v5h-4v-2H8v2z" fill="#1579d0" />
				</svg>
			</TaskButton>
			<TaskButton label="Mail">
				<svg viewBox="0 0 24 24" className="size-6">
					<path d="M0 8L12 .5 24 8v3H0z" fill="#0f4f9c" />
					<path d="M2 8h20v8H2z" fill="#f5f9fd" />
					<path d="M0 8l12 7 12-7v14q0 1-1 1H1q-1 0-1-1z" fill="#2ba4ea" />
					<path d="M24 8v14q0 1-1 1L9 13.200l3 1.800z" fill="#1a86d8" />
				</svg>
			</TaskButton>
			<TaskButton label="Command Prompt" active mark="bg-[#1471c0] w-4">
				<CmdIcon className="h-5 w-6" />
			</TaskButton>
		</div>
		<div className="flex items-center justify-end">
			<button aria-label="Show hidden icons">
				<svg viewBox="0 0 12 8" className="h-2 w-3" fill="none" stroke="#222" strokeWidth="1.300">
					<path d="M.5 7L6 1.500 11.500 7" />
				</svg>
			</button>
			<button aria-label="Meet now" className="ml-3">
				<svg viewBox="0 0 14 16" className="h-4 w-[14px]" fill="none" stroke="#222" strokeWidth="1.200">
					<rect x="2" y="4" width="7" height="8" rx="1.500" />
					<path d="M9 7l2.500-1.500v5L9 9M2.500 2Q6 0 9.500 2M2.500 14Q6 16 9.500 14" />
				</svg>
			</button>
			<button aria-label="Network" className="ml-2">
				<svg viewBox="0 0 16 14" className="h-[14px] w-4" fill="none" stroke="#222" strokeWidth="1.200">
					<path d="M5.500 2.500h10v7h-12V6M9.500 10v3M6 13h7M.5 1.500h4V5h-4zM2.500 5v8" />
				</svg>
			</button>
			<button aria-label="Volume muted" className="ml-[7px]">
				<svg viewBox="0 0 18 16" className="h-4 w-[18px]" fill="none">
					<path d="M1 5h2l4-3.500v12L3 10H1z" stroke="#222" strokeWidth="1.200" />
					<circle cx="12.500" cy="11" r="4.800" fill="#c8283c" />
					<path d="M10.500 9l4 4M14.500 9l-4 4" stroke="#fff" strokeWidth="1.200" />
				</svg>
			</button>
			<button className="ml-2 w-[64px] text-center leading-[15px]">
				7:57PM
				<br />
				Sunday
				<br />
				6/11/2023
			</button>
			<button aria-label="Notifications" className="ml-4">
				<svg viewBox="0 0 16 16" className="size-4" fill="none" stroke="#222" strokeWidth="1.200">
					<path d="M.5 1h15v11.500H11L8 15.300 5 12.500H.5z" />
				</svg>
			</button>
			<span className="ml-5 mr-[3px] h-12 w-px bg-[#d0d0d0]" />
		</div>
	</footer>
);

export default function App() {
	return (
		<div className="flex min-h-screen flex-col bg-[#0078d7] font-['Open_Sans','Noto_Sans',sans-serif] text-[11px]">
			<main className="relative flex-1 overflow-hidden bg-[linear-gradient(78deg,#00b2fb_0%,#00a6fa_16%,#0092ea_32%,#0074de_50%,#0458cf_66%,#0446c2_84%,#0648c0_100%)]">
				<ul className="flex w-[78px] flex-col pt-[7px]">
					{desktopIcons.map((item) => (
						<li key={item.label} className="h-[98px]">
							<button className="flex w-full flex-col items-center text-white">
								<span className="relative flex h-12 w-12 items-end justify-center">
									{item.icon}
									{item.shortcut && <ShortcutBadge />}
								</span>
								<span className="mt-1 w-[70px] text-xs leading-[15px] [text-shadow:1px_1px_2px_#000,0_0_2px_#000]">{item.label}</span>
							</button>
						</li>
					))}
				</ul>
				<p className="absolute bottom-4 left-0 text-[11px] text-[#4f7fae]">157633\ianqin07z5</p>
				<div className="absolute bottom-0 right-[5px] text-right leading-[17px] text-white">
					<p>Do not take screen shots of this build.</p>
					<p>Windows 11 Pro Insider Preview</p>
					<p>Evaluation copy. Build 21380.fs_dev6_flt.210511-1900</p>
				</div>
				<section className="absolute bottom-[58px] left-[130px] right-[110px] top-[71px] flex flex-col overflow-hidden rounded-lg bg-white shadow-[0_14px_36px_rgba(0,20,60,0.4)]">
					<TitleBar />
					<Ribbon />
					<AddressRow />
					<div className="flex min-h-0 flex-1">
						<Sidebar />
						<FileList />
					</div>
					<StatusBar />
				</section>
				<svg viewBox="0 0 12 20" className="absolute left-[495px] top-[427px] h-5 w-3" fill="#fff" stroke="#111">
					<path d="M.5 1v15l3.500-3.300L6.500 18.500l2.500-1-2.500-5.500h5z" />
				</svg>
			</main>
			<Taskbar />
		</div>
	);
}
